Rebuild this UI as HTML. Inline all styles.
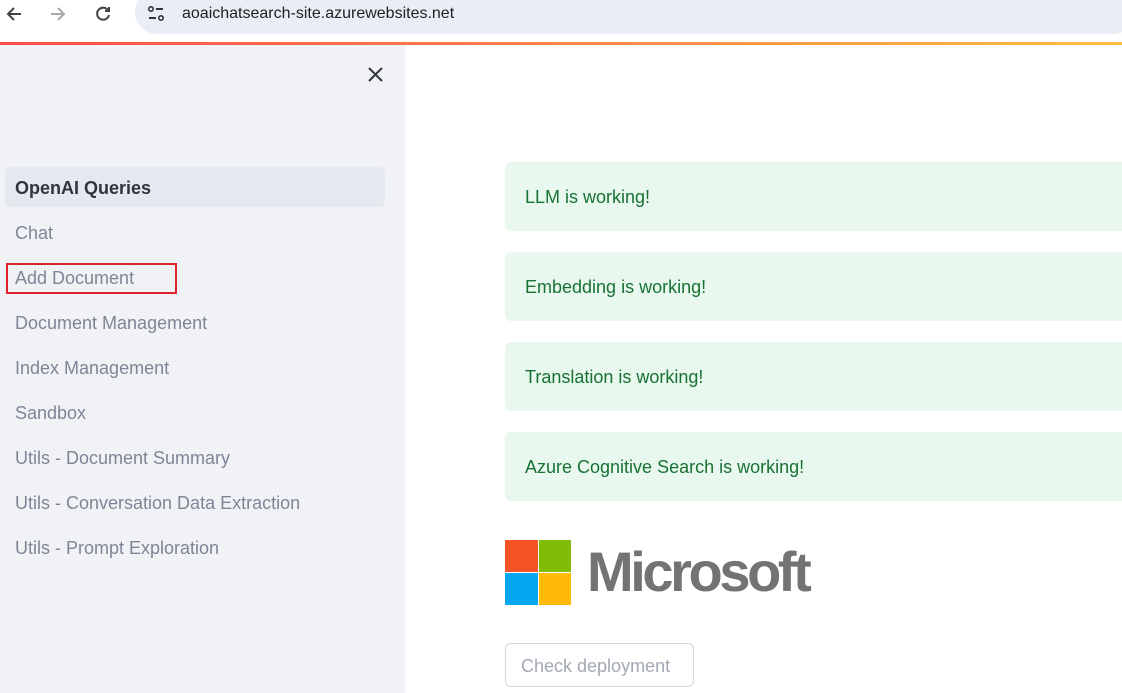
<!DOCTYPE html>
<html><head><meta charset="utf-8"><style>
*{margin:0;padding:0;box-sizing:border-box}
body{width:1122px;height:693px;overflow:hidden;background:#fff;font-family:"Liberation Sans",sans-serif;position:relative}
.top{position:absolute;left:0;top:0;width:1122px;height:42px;background:#fff}
.pill{position:absolute;left:135px;top:-10px;width:1000px;height:44px;background:#e9eef6;border-radius:22px}
.url{position:absolute;left:182px;top:5px;font-size:16px;color:#1f1f1f}
.bar{position:absolute;left:0;top:42px;width:1122px;height:3px;background:linear-gradient(90deg,#ff4b4b,#ffbd45)}
.side{position:absolute;left:0;top:45px;width:405px;height:648px;background:#f0f2f6}
.nav{position:absolute;left:15px;font-size:18px;color:#808495}
.sel{position:absolute;left:5px;top:167px;width:380px;height:40px;background:#e4e8ef;border-radius:6px}
.box{position:absolute;left:505px;width:630px;height:69px;background:#e8f8ee;border-radius:6px;color:#177233;font-size:18px;padding:25px 0 0 20px}
</style></head><body>
<div class="top">
<svg style="position:absolute;left:4px;top:4px" width="20" height="20" viewBox="0 0 20 20"><path d="M17 10H4M10 4L4 10L10 16" stroke="#444" stroke-width="2" fill="none"/></svg>
<svg style="position:absolute;left:48px;top:4px" width="20" height="20" viewBox="0 0 20 20"><path d="M3 10H16M10 4L16 10L10 16" stroke="#aaa" stroke-width="2" fill="none"/></svg>
<svg style="position:absolute;left:93px;top:3px" width="20" height="20" viewBox="0 0 20 20"><path d="M15.5 8A6 6 0 1 0 16 12" stroke="#444" stroke-width="2" fill="none"/><path d="M12 8H16V4" stroke="#444" stroke-width="2" fill="none"/></svg>
<div class="pill"></div>
<svg style="position:absolute;left:146px;top:4px" width="20" height="20" viewBox="0 0 20 20"><circle cx="5" cy="5" r="2.2" stroke="#333" stroke-width="1.6" fill="none"/><path d="M10 5H17M3 14H10" stroke="#333" stroke-width="2"/><circle cx="15" cy="14" r="2.2" stroke="#333" stroke-width="1.6" fill="none"/></svg>
<div class="url">aoaichatsearch-site.azurewebsites.net</div>
</div>
<div class="bar"></div>
<div class="side"></div>
<svg style="position:absolute;left:368px;top:67px" width="15" height="15" viewBox="0 0 15 15"><path d="M1 1L14 14M14 1L1 14" stroke="#31333f" stroke-width="2"/></svg>
<div class="sel"></div>
<div class="nav" style="top:178px;color:#31333f;font-weight:bold">OpenAI Queries</div>
<div class="nav" style="top:223px">Chat</div>
<div style="position:absolute;left:6px;top:263px;width:171px;height:31px;border:2px solid #e0202a"></div>
<div class="nav" style="top:268px">Add Document</div>
<div class="nav" style="top:313px">Document Management</div>
<div class="nav" style="top:358px">Index Management</div>
<div class="nav" style="top:403px">Sandbox</div>
<div class="nav" style="top:448px">Utils - Document Summary</div>
<div class="nav" style="top:493px">Utils - Conversation Data Extraction</div>
<div class="nav" style="top:538px">Utils - Prompt Exploration</div>
<div class="box" style="top:162px">LLM is working!</div>
<div class="box" style="top:252px">Embedding is working!</div>
<div class="box" style="top:342px">Translation is working!</div>
<div class="box" style="top:432px">Azure Cognitive Search is working!</div>
<div style="position:absolute;left:505px;top:540px;width:33px;height:32px;background:#f35325"></div>
<div style="position:absolute;left:539px;top:540px;width:32px;height:32px;background:#81bc06"></div>
<div style="position:absolute;left:505px;top:573px;width:33px;height:32px;background:#05a6f0"></div>
<div style="position:absolute;left:539px;top:573px;width:32px;height:32px;background:#ffba08"></div>
<div style="position:absolute;left:587px;top:539px;font-size:56px;font-weight:bold;color:#737373;letter-spacing:-3.4px">Microsoft</div>
<div style="position:absolute;left:505px;top:643px;width:189px;height:44px;border:1px solid #d6d6d9;border-radius:6px;color:#a3a8b4;font-size:18px;padding:12px 0 0 15px">Check deployment</div>
</body></html>
